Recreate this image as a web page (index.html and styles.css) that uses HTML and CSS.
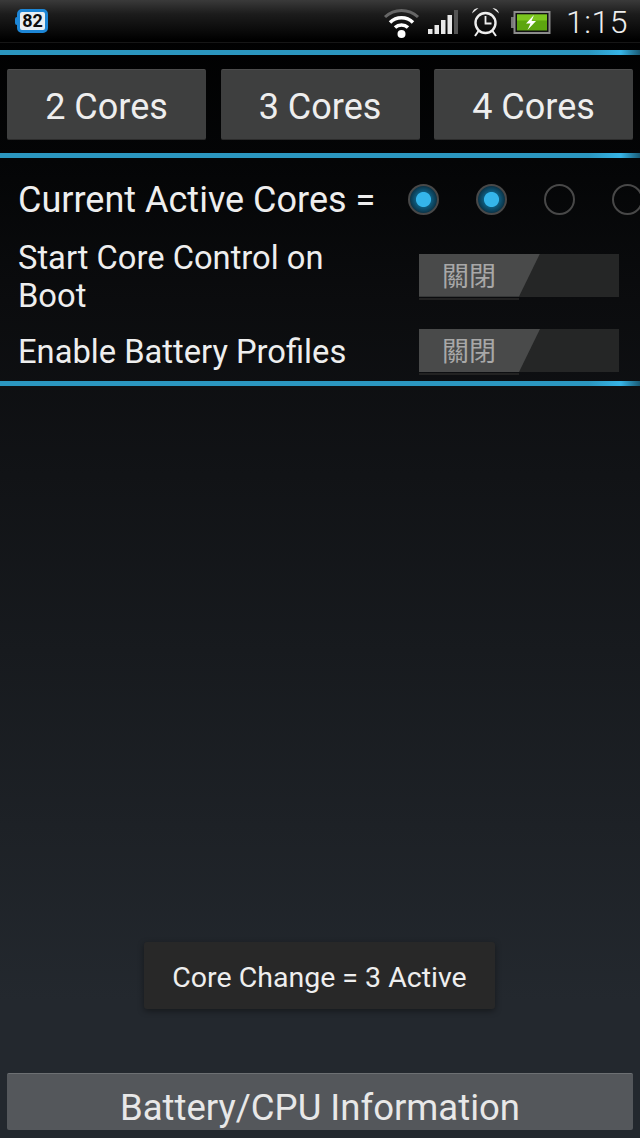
FILE: index.html
```html
<!DOCTYPE html>
<html lang="zh-Hant">
<head>
    <meta charset="UTF-8">
    <meta name="viewport" content="width=device-width, initial-scale=1.0">
    <title>Core Control</title>
    <link rel="stylesheet" href="styles.css">
</head>
<body>
    <div class="phone">
        <!-- Status bar -->
        <div class="statusbar">
            <div class="badge"><span>82</span></div>
            <div class="status-icons">
                <svg class="icon-wifi" width="37" height="31" viewBox="0 0 37 31">
                    <path d="M2 10 A24 24 0 0 1 35 10" fill="none" stroke="#666" stroke-width="3"/>
                    <path d="M7 15.500 A16.500 16.500 0 0 1 30 15.500" fill="none" stroke="#fff" stroke-width="3.500"/>
                    <path d="M12 20.500 A9.500 9.500 0 0 1 25 20.500" fill="none" stroke="#fff" stroke-width="3.500"/>
                    <circle cx="18.500" cy="27" r="4" fill="#fff"/>
                </svg>
                <svg class="icon-signal" width="30" height="25" viewBox="0 0 30 25">
                    <rect x="0" y="19" width="4.500" height="5" fill="#e8e8e8"/>
                    <rect x="6.500" y="15" width="4.500" height="9" fill="#e8e8e8"/>
                    <rect x="13" y="10" width="4.500" height="14" fill="#e8e8e8"/>
                    <rect x="19.500" y="5" width="4.500" height="19" fill="#e8e8e8"/>
                    <rect x="26" y="0" width="4" height="24" fill="#555"/>
                </svg>
                <svg class="icon-alarm" width="29" height="30" viewBox="0 0 29 30">
                    <circle cx="14.500" cy="16" r="10" fill="none" stroke="#eee" stroke-width="2.400"/>
                    <path d="M14.500 9 V16.500 H20.500" fill="none" stroke="#eee" stroke-width="1.800"/>
                    <path d="M1 6.500 A7 7 0 0 1 7.500 1 Z M28 6.500 A7 7 0 0 0 21.500 1 Z" fill="#eee"/>
                    <path d="M7.500 24 L4 29 M21.500 24 L25 29" fill="none" stroke="#eee" stroke-width="2"/>
                </svg>
                <svg class="icon-battery" width="40" height="23" viewBox="0 0 40 23">
                    <rect x="0" y="6" width="3" height="11" fill="#777"/>
                    <rect x="3.500" y="1" width="35" height="21" fill="#111" stroke="#8c8c8c" stroke-width="2"/>
                    <rect x="6" y="3.500" width="30" height="16" fill="#5da60f"/>
                    <rect x="6" y="3.500" width="30" height="6" fill="#7cc61f"/>
                    <path d="M23 4 L15 12.500 H19.500 L16.500 19 L25 10 H20.500 Z" fill="#fff"/>
                </svg>
                <span class="clock">1:15</span>
            </div>
        </div>

        <div class="rule rule-top"></div>

        <div class="core-buttons">
            <button class="core-btn">2 Cores</button>
            <button class="core-btn">3 Cores</button>
            <button class="core-btn">4 Cores</button>
        </div>

        <div class="rule"></div>

        <!-- Settings -->
        <div class="row row-cores">
            <div class="label">Current Active Cores =</div>
            <div class="radios">
                <span class="radio on"></span>
                <span class="radio on"></span>
                <span class="radio"></span>
                <span class="radio"></span>
            </div>
        </div>
        <div class="row row-boot">
            <div class="label">Start Core Control on Boot</div>
            <div class="toggle"><div class="thumb">關閉</div></div>
        </div>
        <div class="row row-battery">
            <div class="label">Enable Battery Profiles</div>
            <div class="toggle"><div class="thumb">關閉</div></div>
        </div>

        <div class="rule"></div>

        <div class="toast">Core Change = 3 Active</div>

        <button class="info-btn">Battery/CPU Information</button>
    </div>
</body>
</html>
```

FILE: styles.css
```css
/* Core control screen */
body {
    margin: 0;
    padding: 0;
    background: #000;
}

.phone {
    position: relative;
    display: flex;
    flex-direction: column;
    width: 640px;
    height: 1138px;
    overflow: hidden;
    font-family: Roboto, "Noto Sans CJK TC", sans-serif;
    color: #eee;
    background: linear-gradient(180deg, #000 0, #040506 160px, #0b0c0e 300px, #23282e 1000px, #23282e 100%);
}

/* Status bar */
.statusbar {
    display: flex;
    justify-content: space-between;
    align-items: center;
    height: 43px;
    box-sizing: border-box;
    padding: 2px 12px 0 17px;
    background: linear-gradient(180deg, #3a3a3a 0, #1c1c1c 14px, #000 40px);
    border-bottom: 1px solid #161616;
}

.badge {
    position: relative;
    display: flex;
    align-items: center;
    justify-content: center;
    width: 31px;
    height: 24px;
    box-sizing: border-box;
    margin-bottom: 3px;
    border: 3px solid #1d86d6;
    border-radius: 5px;
    background: #e8eef2;
    color: #0c0c0c;
    font-size: 18px;
    font-weight: 700;
}

/* battery nub on the left of the badge */
.badge::before {
    content: "";
    position: absolute;
    left: -5px;
    top: 5px;
    width: 3px;
    height: 8px;
    border-radius: 2px 0 0 2px;
    background: #1d86d6;
}

.status-icons {
    display: flex;
    align-items: center;
}

.icon-wifi {
    margin-right: 8px;
}

.icon-signal {
    margin-right: 13px;
}

.icon-alarm {
    margin-right: 11px;
}

.icon-battery {
    margin-right: 15px;
}

.clock {
    font-size: 32px;
    font-weight: 300;
    color: #eee;
    letter-spacing: 0.5px;
}

/* Blue divider lines */
.rule {
    flex: none;
    height: 5px;
    background: linear-gradient(90deg, #2b96bf 0, #2b96bf 92%, #36b4e6 97%, #1a5a74 100%);
}

.rule-top {
    margin-top: 7px;
}

.core-buttons {
    display: flex;
    justify-content: space-between;
    padding: 14px 7px 13px;
}

.core-btn {
    width: 199px;
    height: 71px;
    padding: 5px 0 0;
    border: none;
    border-top: 1px solid #4c4c4c;
    border-bottom: 1px solid #2c2c2c;
    border-radius: 2px;
    background: #3e3f3f;
    color: #eee;
    font-family: inherit;
    font-size: 36px;
}

.row {
    display: flex;
    align-items: center;
    padding-left: 18px;
}

.label {
    font-size: 32.700px;
    line-height: 38px;
}

.row-cores {
    height: 56px;
    margin-top: 14px;
}

.row-cores .label {
    width: 390px;
    flex: none;
    font-size: 36px;
    white-space: nowrap;
}

.radios {
    display: flex;
    flex: none;
    gap: 37px;
    margin-top: -2px;
}

.radio {
    flex: none;
    width: 31px;
    height: 31px;
    box-sizing: border-box;
    border: 2px solid #484848;
    border-radius: 50%;
}

.radio.on {
    background: radial-gradient(circle, #35b5ea 0, #35b5ea 37%, #0e5a7c 42%, #0b3448 70%, #0a1c26 100%);
}

.row-boot {
    height: 76px;
    margin-top: 11px;
}

.row-boot .label {
    width: 401px;
    flex: none;
    box-sizing: border-box;
    padding-right: 50px;
}

.row-battery {
    box-sizing: border-box;
    height: 66px;
    padding-top: 7px;
}

.row-battery .label {
    width: 401px;
    flex: none;
    white-space: nowrap;
}

.toggle {
    position: relative;
    flex: none;
    width: 200px;
    height: 43px;
    margin-top: -4px;
    background: #252626;
}

.row-battery .toggle {
    margin-top: -2px;
}

/* thin shadow under the off side */
.toggle::after {
    content: "";
    position: absolute;
    left: 0;
    bottom: -3px;
    width: 100px;
    height: 2px;
    background: #222;
}

.thumb {
    box-sizing: border-box;
    height: 43px;
    padding-left: 23px;
    line-height: 47px;
    font-size: 27px;
    color: #a8a8a8;
    background: #494a4a;
    clip-path: polygon(0 0, 121px 0, 100px 100%, 0 100%);
}

/* Toast floats over the page */
.toast {
    position: absolute;
    left: 144px;
    top: 942px;
    width: 351px;
    height: 67px;
    line-height: 71px;
    text-align: center;
    font-size: 28.500px;
    color: #eee;
    background: #282828;
    border-radius: 3px;
    box-shadow: 0 2px 6px rgba(0, 0, 0, 0.4);
}

.info-btn {
    flex: none;
    width: 626px;
    height: 57px;
    margin: auto 7px 8px;
    padding: 11px 0 0;
    overflow: hidden;
    border: none;
    border-top: 1px solid #6d7073;
    border-radius: 2px;
    background: #54575b;
    color: #e8e8e8;
    font-family: inherit;
    font-size: 36.500px;
    line-height: 44px;
}
```
